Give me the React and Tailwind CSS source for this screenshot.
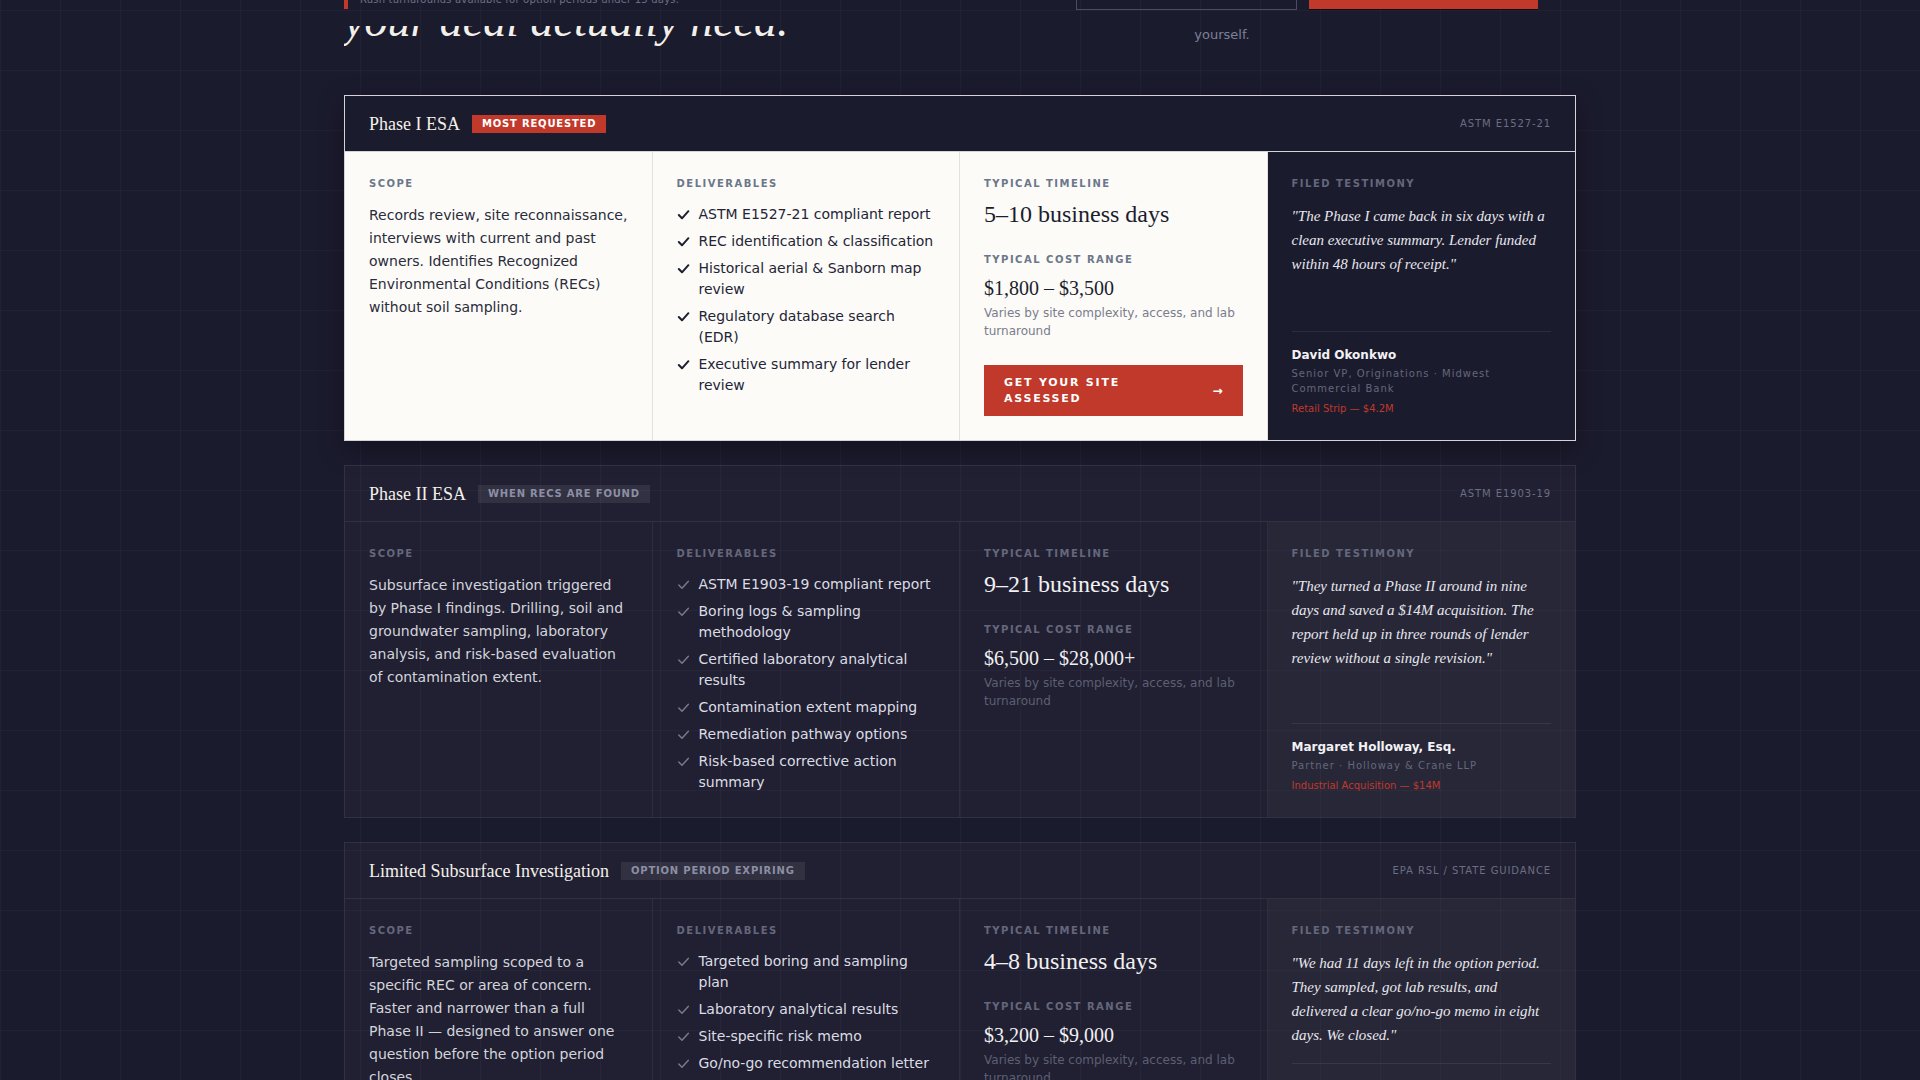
import React from "react";

const services = [
  {
    title: "Phase I ESA",
    badge: "MOST REQUESTED",
    standard: "ASTM E1527-21",
    featured: true,
    scope:
      "Records review, site reconnaissance, interviews with current and past owners. Identifies Recognized Environmental Conditions (RECs) without soil sampling.",
    deliverables: [
      "ASTM E1527-21 compliant report",
      "REC identification & classification",
      "Historical aerial & Sanborn map review",
      "Regulatory database search (EDR)",
      "Executive summary for lender review",
    ],
    timeline: "5–10 business days",
    cost: "$1,800 – $3,500",
    quote:
      "\"The Phase I came back in six days with a clean executive summary. Lender funded within 48 hours of receipt.\"",
    name: "David Okonkwo",
    role: "Senior VP, Originations · Midwest Commercial Bank",
    deal: "Retail Strip — $4.2M",
  },
  {
    title: "Phase II ESA",
    badge: "WHEN RECS ARE FOUND",
    standard: "ASTM E1903-19",
    featured: false,
    scope:
      "Subsurface investigation triggered by Phase I findings. Drilling, soil and groundwater sampling, laboratory analysis, and risk-based evaluation of contamination extent.",
    deliverables: [
      "ASTM E1903-19 compliant report",
      "Boring logs & sampling methodology",
      "Certified laboratory analytical results",
      "Contamination extent mapping",
      "Remediation pathway options",
      "Risk-based corrective action summary",
    ],
    timeline: "9–21 business days",
    cost: "$6,500 – $28,000+",
    quote:
      "\"They turned a Phase II around in nine days and saved a $14M acquisition. The report held up in three rounds of lender review without a single revision.\"",
    name: "Margaret Holloway, Esq.",
    role: "Partner · Holloway & Crane LLP",
    deal: "Industrial Acquisition — $14M",
  },
  {
    title: "Limited Subsurface Investigation",
    badge: "OPTION PERIOD EXPIRING",
    standard: "EPA RSL / STATE GUIDANCE",
    featured: false,
    scope:
      "Targeted sampling scoped to a specific REC or area of concern. Faster and narrower than a full Phase II — designed to answer one question before the option period closes.",
    deliverables: [
      "Targeted boring and sampling plan",
      "Laboratory analytical results",
      "Site-specific risk memo",
      "Go/no-go recommendation letter",
    ],
    timeline: "4–8 business days",
    cost: "$3,200 – $9,000",
    quote:
      "\"We had 11 days left in the option period. They sampled, got lab results, and delivered a clear go/no-go memo in eight days. We closed.\"",
    name: "Ryan Castellano",
    role: "Principal · Castellano Development Group",
    deal: "Mixed-Use Parcel — $9.8M",
  },
];

function Label({ light, children }) {
  return (
    <div
      className={
        "mb-3 text-[10px] font-bold leading-4 tracking-[0.15em] " +
        (light ? "text-[#6b7789]" : "text-[#65677c]")
      }
    >
      {children}
    </div>
  );
}

function Check({ light }) {
  return (
    <svg
      viewBox="0 0 13 21"
      className="h-[21px] w-[13px] shrink-0"
      fill="none"
      stroke={light ? "#1d1e2f" : "#787b90"}
      strokeWidth={light ? 2 : 1.4}
      strokeLinecap="round"
      strokeLinejoin="round"
    >
      <polyline points="1.8,11 5,14.3 11.4,7.2" />
    </svg>
  );
}

function ServiceCard({ s }) {
  const f = s.featured;
  return (
    <article
      className={
        f
          ? "border border-[#d3d3da] bg-[#1b1b2e] shadow-[0_8px_24px_rgba(0,0,0,0.35)]"
          : "border border-white/[0.08] bg-white/[0.025]"
      }
    >
      <header
        className={
          "flex h-[56px] items-center justify-between border-b px-6 " +
          (f ? "border-[#d3d3da]" : "border-white/[0.08]")
        }
      >
        <div className="flex items-center gap-3">
          <h3 className="font-['Liberation_Serif',serif] text-[18px] leading-none text-[#f3f0e9]">
            {s.title}
          </h3>
          <span
            className={
              "px-2.5 text-[10px] font-bold leading-[18px] tracking-[0.08em] " +
              (f ? "bg-[#c0392b] text-white" : "bg-white/[0.08] text-[#8c8fa4]")
            }
          >
            {s.badge}
          </span>
        </div>
        <span className="text-[10px] tracking-[0.09em] text-[#6b6e83]">{s.standard}</span>
      </header>

      <div className="grid grid-cols-4">
        {/* scope */}
        <div
          className={
            "border-r p-6 " + (f ? "border-[#e4e2dc] bg-[#fcfbf8]" : "border-white/[0.06]")
          }
        >
          <Label light={f}>SCOPE</Label>
          <p
            className={
              "text-[14px] leading-[23px] " + (f ? "text-[#2a2b3b]" : "text-[#d4d4dc]")
            }
          >
            {s.scope}
          </p>
        </div>

        {/* deliverables */}
        <div
          className={
            "border-r p-6 " + (f ? "border-[#e4e2dc] bg-[#fcfbf8]" : "border-white/[0.06]")
          }
        >
          <Label light={f}>DELIVERABLES</Label>
          <ul className="flex flex-col gap-1.5">
            {s.deliverables.map((d) => (
              <li key={d} className="flex gap-[9px]">
                <Check light={f} />
                <span
                  className={
                    "text-[14px] leading-[21px] " + (f ? "text-[#232436]" : "text-[#dcdce4]")
                  }
                >
                  {d}
                </span>
              </li>
            ))}
          </ul>
        </div>

        {/* timeline & cost */}
        <div
          className={
            "border-r p-6 " + (f ? "border-[#e4e2dc] bg-[#fcfbf8]" : "border-white/[0.06]")
          }
        >
          <div
            className={
              "text-[10px] font-bold leading-4 tracking-[0.15em] " +
              (f ? "text-[#6b7789]" : "text-[#65677c]")
            }
          >
            TYPICAL TIMELINE
          </div>
          <div
            className={
              "mt-1.5 font-['Liberation_Serif',serif] text-[24px] leading-8 " +
              (f ? "text-[#1c1d2e]" : "text-[#f1f0f3]")
            }
          >
            {s.timeline}
          </div>
          <div
            className={
              "mt-[22px] text-[10px] font-bold leading-4 tracking-[0.15em] " +
              (f ? "text-[#6b7789]" : "text-[#65677c]")
            }
          >
            TYPICAL COST RANGE
          </div>
          <div
            className={
              "mt-1.5 font-['Liberation_Serif',serif] text-[20px] leading-7 " +
              (f ? "text-[#1c1d2e]" : "text-[#f1f0f3]")
            }
          >
            {s.cost}
          </div>
          <p
            className={
              "mt-0.5 text-[12px] leading-[18px] " + (f ? "text-[#7a7d8b]" : "text-[#5d5f73]")
            }
          >
            Varies by site complexity, access, and lab turnaround
          </p>
          {f && (
            <button className="mt-[25px] flex h-[51px] w-full items-center justify-between bg-[#c0392b] px-5 text-left">
              <span className="max-w-[150px] text-[11px] font-bold leading-4 tracking-[0.16em] text-white">
                GET YOUR SITE ASSESSED
              </span>
              <span className="text-[12px] font-bold leading-none text-white">→</span>
            </button>
          )}
        </div>

        {/* testimony */}
        <div className={"flex flex-col p-6 " + (f ? "bg-[#1b1b2e]" : "bg-white/[0.03]")}>
          <Label light={false}>FILED TESTIMONY</Label>
          <blockquote className="mb-4 font-['Liberation_Serif',serif] text-[15px] italic leading-6 text-[#e8e7ed]">
            {s.quote}
          </blockquote>
          <div className="mt-auto border-t border-white/[0.08] pt-[14px]">
            <div className="text-[12px] font-bold leading-[18px] text-[#f2f2f4]">{s.name}</div>
            <div className="mt-0.5 text-[10px] leading-[15px] tracking-[0.1em] text-[#65677b]">
              {s.role}
            </div>
            <div className="mt-[5px] text-[10px] leading-[15px] text-[#c0392b]">{s.deal}</div>
          </div>
        </div>
      </div>
    </article>
  );
}

export default function App() {
  return (
    <div className="h-screen overflow-hidden bg-[#1b1b2e] font-['DejaVu_Sans',sans-serif] [background-image:linear-gradient(to_right,rgba(255,255,255,0.028)_1px,transparent_1px),linear-gradient(to_bottom,rgba(255,255,255,0.028)_1px,transparent_1px)] [background-position:0_10px] [background-size:60px_60px]">
      <div className="mx-auto max-w-7xl px-6">
        {/* end of the hero block */}
        <div className="flex">
          <div className="w-[700px]">
            <div className="flex h-[9px] flex-col justify-end overflow-hidden border-l-4 border-[#c0392b] pl-3">
              <p className="whitespace-nowrap pb-[2px] text-[10px] leading-[14px] tracking-[0.02em] text-[#6d7083]">
                Rush turnarounds available for option periods under 15 days.
              </p>
            </div>
            <div className="mt-[17px] flex h-[25px] flex-col justify-end overflow-hidden">
              <h2 className="whitespace-nowrap pb-[7px] font-['Liberation_Serif',serif] text-[46px] italic leading-[46px] text-[#f3f0e9]">
                your deal actually need.
              </h2>
            </div>
          </div>
          <div className="ml-auto w-[500px]">
            <div className="flex h-[10px] items-end gap-3 overflow-hidden">
              <div className="h-[48px] w-[221px] shrink-0 border border-[#4a4c61]" />
              <div className="mb-[1px] h-[48px] w-[229px] shrink-0 bg-[#c0392b] shadow-[0_1px_0_rgba(0,0,0,0.45)]" />
            </div>
            <p className="mt-[15px] w-[292px] text-center text-[13px] leading-5 text-[#7d8195]">
              yourself.
            </p>
          </div>
        </div>

        <div className="mt-[44px] flex flex-col gap-6">
          {services.map((s) => (
            <ServiceCard key={s.title} s={s} />
          ))}
        </div>
      </div>
    </div>
  );
}
